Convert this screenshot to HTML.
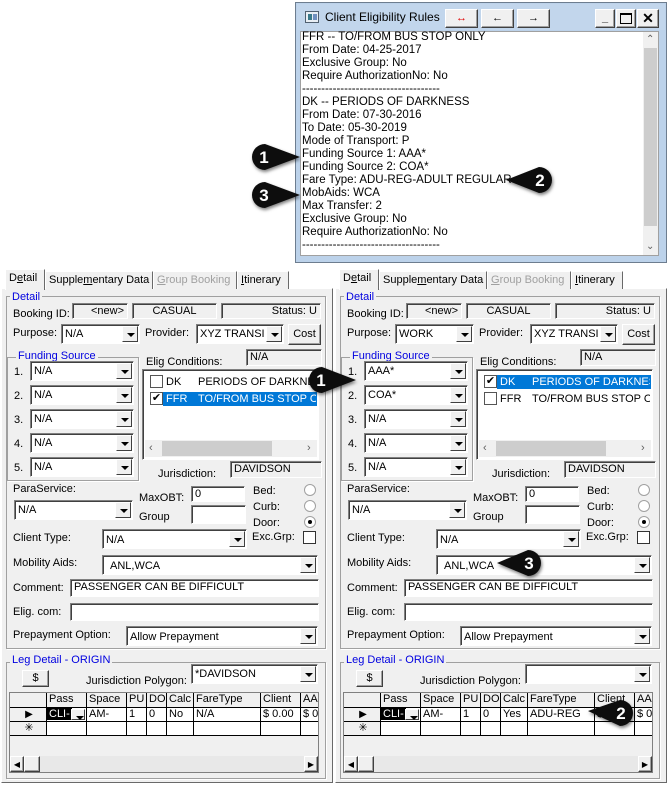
<!DOCTYPE html>
<html><head><meta charset="utf-8"><style>
*{box-sizing:border-box;margin:0;padding:0}
body{width:667px;height:785px;background:#fff;position:relative;overflow:hidden;font-family:"Liberation Sans",sans-serif;font-size:11px;color:#000}
.a{position:absolute;white-space:nowrap;line-height:14px}
.p{position:absolute;top:269px;width:334px;height:516px}
.body{position:absolute;left:1px;top:19px;width:332px;height:495px;background:#f0f0f0;border:1px solid;border-color:#fff #696969 #696969 #fff}
.tab{position:absolute;top:2px;height:18px;background:#f0f0f0;border:1px solid;border-bottom:none;border-color:#fff #696969 #696969 #fff;padding:2px 3px;line-height:13px;white-space:nowrap;overflow:hidden}
.gb{position:absolute;border:1px solid #a0a0a0;box-shadow:1px 1px #fff}
.gl{position:absolute;background:#f0f0f0;color:#0000e0;padding:0 2px;line-height:13px;white-space:nowrap}
.f{position:absolute;background:#fff;border:1px solid;border-color:#808080 #fff #fff #808080;box-shadow:inset 1px 1px #404040;padding:1px 3px;line-height:13px;overflow:hidden;white-space:nowrap}
.ro{background:#f0f0f0}
.dd{position:absolute;right:1px;top:1px;bottom:1px;width:16px;background:#f0f0f0;border:1px solid;border-color:#fff #404040 #404040 #fff}
.dd:after{content:"";position:absolute;left:4px;top:6px;border-left:4px solid transparent;border-right:4px solid transparent;border-top:4px solid #000}
.btn{position:absolute;background:#f0f0f0;border:1px solid;border-color:#fff #404040 #404040 #fff;box-shadow:inset -1px -1px #a0a0a0;text-align:center;line-height:15px}
.rad{position:absolute;width:12px;height:12px;border-radius:50%;background:#fff;border:1px solid #a0a0a0}
.chk{position:absolute;width:13px;height:13px;background:#fff;border:1px solid #555}
.g{position:absolute;border-right:1px solid #000;border-bottom:1px solid #000;line-height:13px;padding-left:2px;overflow:hidden;white-space:nowrap;background:#fff}
.gh{background:#f0f0f0}
</style></head><body>

<!-- top window -->
<div style="position:absolute;left:295px;top:2px;width:372px;height:261px;background:#bcd2ea;border:1px solid #6d7d8f"></div>
<div style="position:absolute;left:297px;top:4px;width:368px;height:26px;background:#c2d6ec"></div>
<div style="position:absolute;left:305px;top:11px;width:14px;height:12px;border:1px solid #506070;background:#e8eef4"><div style="position:absolute;left:2px;top:2px;width:4px;height:6px;background:#3a7a8a"></div><div style="position:absolute;left:7px;top:2px;width:4px;height:6px;background:#7090c0"></div></div>
<div class="a" style="left:325px;top:10px;font-size:12px">Client Eligibility Rules</div>
<div class="btn" style="left:445px;top:9px;width:33px;height:19px;color:#e00000;font-weight:bold;line-height:16px">↔</div>
<div class="btn" style="left:481px;top:9px;width:33px;height:19px;font-weight:bold;line-height:16px">←</div>
<div class="btn" style="left:517px;top:9px;width:33px;height:19px;font-weight:bold;line-height:16px">→</div>
<div class="btn" style="left:595px;top:9px;width:20px;height:19px;font-weight:bold;line-height:16px">_</div>
<div class="btn" style="left:616px;top:9px;width:20px;height:19px;"><div style="position:absolute;left:3px;top:3px;width:12px;height:11px;border:2px solid #000;border-width:2px 1px 1px 1px"></div></div>
<div class="btn" style="left:637px;top:9px;width:22px;height:19px;font-weight:bold;font-size:14px;line-height:16px">✕</div>
<div style="position:absolute;left:300px;top:31px;width:359px;height:225px;background:#fff;border:1px solid #a0a0a0"></div>
<div style="position:absolute;left:643px;top:32px;width:15px;height:223px;background:#f0f0f0"></div>
<div style="position:absolute;left:644px;top:48px;width:13px;height:178px;background:#cdcdcd"></div>
<div class="a" style="left:646px;top:33px;font-size:10px;color:#606060">⌃</div>
<div class="a" style="left:646px;top:240px;font-size:10px;color:#606060">⌄</div>
<div class="a" style="left:302px;top:31px;line-height:13px;font-size:11.5px">FFR -- TO/FROM BUS STOP ONLY<br>From Date: 04-25-2017<br>Exclusive Group: No<br>Require AuthorizationNo: No<br>------------------------------------<br>DK -- PERIODS OF DARKNESS<br>From Date: 07-30-2016<br>To Date: 05-30-2019<br>Mode of Transport: P<br>Funding Source 1: AAA*<br>Funding Source 2: COA*<br>Fare Type: ADU-REG-ADULT REGULAR<br>MobAids: WCA<br>Max Transfer: 2<br>Exclusive Group: No<br>Require AuthorizationNo: No<br>------------------------------------</div>

<!-- PANEL LEFT -->
<div class="p" style="left:0">
<div class="body"></div>
<div class="tab" style="left:5px;width:40px;top:0;height:21px;z-index:2">D<u>e</u>tail</div>
<div class="tab" style="left:45px;width:108px">Supple<u>m</u>entary Data</div>
<div class="tab" style="left:153px;width:84px;color:#a0a0a0"><u>G</u>roup Booking</div>
<div class="tab" style="left:237px;width:52px"><u>I</u>tinerary</div>
<div class="gb" style="left:6px;top:27px;width:320px;height:353px"></div>
<div class="gl" style="left:10px;top:22px">Detail</div>
<div class="a" style="left:13px;top:38px">Booking ID:</div>
<div class="f ro" style="left:72px;top:34px;width:56px;height:16px;text-align:right">&lt;new&gt;</div>
<div class="f ro" style="left:132px;top:34px;width:85px;height:16px;text-align:center">CASUAL</div>
<div class="f ro" style="left:221px;top:34px;width:100px;height:16px;text-align:right">Status: U</div>
<div class="a" style="left:13px;top:57px">Purpose:</div>
<div class="f" style="left:61px;top:55px;width:79px;height:20px;padding-top:3px">N/A<div class="dd"></div></div>
<div class="a" style="left:145px;top:57px">Provider:</div>
<div class="f" style="left:196px;top:55px;width:88px;height:20px;padding-top:3px">XYZ TRANSI<div class="dd"></div></div>
<div class="btn" style="left:288px;top:55px;width:33px;height:21px;line-height:18px">Cost</div>
<div class="gb" style="left:7px;top:88px;width:132px;height:124px"></div>
<div class="gl" style="left:16px;top:81px">Funding Source</div>
<div class="a" style="left:14px;top:96px">1.</div><div class="f" style="left:30px;top:92px;width:104px;height:20px;padding-top:3px">N/A<div class="dd"></div></div>
<div class="a" style="left:14px;top:120px">2.</div><div class="f" style="left:30px;top:116px;width:104px;height:20px;padding-top:3px">N/A<div class="dd"></div></div>
<div class="a" style="left:14px;top:144px">3.</div><div class="f" style="left:30px;top:140px;width:104px;height:20px;padding-top:3px">N/A<div class="dd"></div></div>
<div class="a" style="left:14px;top:168px">4.</div><div class="f" style="left:30px;top:164px;width:104px;height:20px;padding-top:3px">N/A<div class="dd"></div></div>
<div class="a" style="left:14px;top:192px">5.</div><div class="f" style="left:30px;top:188px;width:104px;height:20px;padding-top:3px">N/A<div class="dd"></div></div>
<div class="a" style="left:146px;top:86px">Elig Conditions:</div>
<div class="f ro" style="left:246px;top:80px;width:76px;height:17px">N/A</div>
<div class="f" style="left:142px;top:100px;width:177px;height:91px;padding:0"></div>
<div class="chk" style="left:150px;top:106px"></div>
<div class="a" style="left:166px;top:106px">DK</div><div class="a" style="left:198px;top:106px;width:117px;overflow:hidden">PERIODS OF DARKNESS</div>
<div style="position:absolute;left:163px;top:123px;width:154px;height:14px;background:#0078d7"></div>
<div class="chk" style="left:150px;top:123px;font-size:11px;line-height:11px;text-align:center">✔</div>
<div class="a" style="left:166px;top:123px;color:#fff">FFR</div><div class="a" style="left:198px;top:123px;width:118px;overflow:hidden;color:#fff">TO/FROM BUS STOP ONLY</div>
<div style="position:absolute;left:145px;top:171px;width:172px;height:17px;background:#f0f0f0"><div style="position:absolute;left:17px;top:1px;width:110px;height:15px;background:#cdcdcd"></div><span class="a" style="left:4px;top:1px;color:#606060">‹</span><span class="a" style="left:162px;top:1px;color:#606060">›</span></div>
<div class="a" style="left:158px;top:198px">Jurisdiction:</div>
<div class="f ro" style="left:230px;top:192px;width:92px;height:17px">DAVIDSON</div>
<div class="a" style="left:13px;top:213px">ParaService:</div>
<div class="f" style="left:14px;top:231px;width:119px;height:20px;padding-top:3px">N/A<div class="dd"></div></div>
<div class="a" style="left:139px;top:222px">MaxOBT:</div>
<div class="f" style="left:191px;top:217px;width:54px;height:16px">0</div>
<div class="a" style="left:139px;top:241px">Group</div>
<div class="f" style="left:191px;top:236px;width:55px;height:19px"></div>
<div class="a" style="left:253px;top:215px">Bed:</div><div class="rad" style="left:304px;top:215px"></div>
<div class="a" style="left:253px;top:231px">Curb:</div><div class="rad" style="left:304px;top:231px"></div>
<div class="a" style="left:253px;top:247px">Door:</div><div class="rad" style="left:304px;top:247px"><div style="position:absolute;left:3px;top:3px;width:4px;height:4px;border-radius:50%;background:#000"></div></div>
<div class="a" style="left:13px;top:262px">Client Type:</div>
<div class="f" style="left:102px;top:260px;width:145px;height:20px;padding-top:4px">N/A<div class="dd"></div></div>
<div class="a" style="left:252px;top:261px">Exc.Grp:</div>
<div class="chk" style="left:303px;top:262px;border-color:#333"></div>
<div class="a" style="left:13px;top:287px">Mobility Aids:</div>
<div class="f" style="left:102px;top:286px;width:216px;height:20px;padding:4px 0 0 7px">ANL,WCA<div class="dd"></div></div>
<div class="a" style="left:13px;top:312px">Comment:</div>
<div class="f" style="left:70px;top:310px;width:249px;height:18px">PASSENGER CAN BE DIFFICULT</div>
<div class="a" style="left:13px;top:336px">Elig. com:</div>
<div class="f" style="left:70px;top:334px;width:249px;height:18px"></div>
<div class="a" style="left:13px;top:359px">Prepayment Option:</div>
<div class="f" style="left:126px;top:357px;width:192px;height:20px;padding:4px 0 0 3px">Allow Prepayment<div class="dd"></div></div>
<div class="gb" style="left:6px;top:393px;width:320px;height:117px"></div>
<div class="gl" style="left:10px;top:385px">Leg Detail - ORIGIN</div>
<div class="btn" style="left:22px;top:401px;width:27px;height:17px">$</div>
<div class="a" style="left:86px;top:405px">Jurisdiction Polygon:</div>
<div class="f" style="left:191px;top:395px;width:127px;height:20px;padding-top:3px">*DAVIDSON<div class="dd"></div></div>
<div style="position:absolute;left:9px;top:423px;width:310px;height:81px;background:#f0f0f0;border:1px solid #808080;overflow:hidden">
<div class="g gh" style="left:0;top:0;width:37px;height:15px"></div>
<div class="g gh" style="left:37px;top:0;width:40px;height:15px">Pass</div>
<div class="g gh" style="left:77px;top:0;width:40px;height:15px">Space</div>
<div class="g gh" style="left:117px;top:0;width:20px;height:15px">PU</div>
<div class="g gh" style="left:137px;top:0;width:20px;height:15px">DO</div>
<div class="g gh" style="left:157px;top:0;width:27px;height:15px">Calc</div>
<div class="g gh" style="left:184px;top:0;width:67px;height:15px">FareType</div>
<div class="g gh" style="left:251px;top:0;width:40px;height:15px">Client</div>
<div class="g gh" style="left:291px;top:0;width:20px;height:15px">AA</div>
<div class="g gh" style="left:0;top:15px;width:37px;height:14px;text-align:center;font-size:10px">▶</div>
<div class="g" style="left:37px;top:15px;width:40px;height:14px;padding:0"><span style="background:#000;color:#fff;padding:0 2px">CLI-</span><div class="dd" style="width:14px;right:1px"></div></div>
<div class="g" style="left:77px;top:15px;width:40px;height:14px">AM-</div>
<div class="g" style="left:117px;top:15px;width:20px;height:14px">1</div>
<div class="g" style="left:137px;top:15px;width:20px;height:14px">0</div>
<div class="g" style="left:157px;top:15px;width:27px;height:14px">No</div>
<div class="g" style="left:184px;top:15px;width:67px;height:14px">N/A</div>
<div class="g" style="left:251px;top:15px;width:40px;height:14px">$ 0.00</div>
<div class="g" style="left:291px;top:15px;width:20px;height:14px">$ 0</div>
<div class="g gh" style="left:0;top:29px;width:37px;height:14px;text-align:center">✳</div>
<div class="g" style="left:37px;top:29px;width:40px;height:14px"></div><div class="g" style="left:77px;top:29px;width:40px;height:14px"></div><div class="g" style="left:117px;top:29px;width:20px;height:14px"></div><div class="g" style="left:137px;top:29px;width:20px;height:14px"></div><div class="g" style="left:157px;top:29px;width:27px;height:14px"></div><div class="g" style="left:184px;top:29px;width:67px;height:14px"></div><div class="g" style="left:251px;top:29px;width:40px;height:14px"></div><div class="g" style="left:291px;top:29px;width:20px;height:14px"></div>
<div style="position:absolute;left:0;top:63px;width:310px;height:16px;background:#e8e8e8"><div class="btn" style="left:0;top:0;width:14px;height:16px;font-size:8px">◀</div><div class="btn" style="left:14px;top:0;width:16px;height:16px"></div><div class="btn" style="left:294px;top:0;width:14px;height:16px;font-size:8px">▶</div></div>
</div>
</div>

<!-- PANEL RIGHT -->
<div class="p" style="left:334px">
<div class="body"></div>
<div class="tab" style="left:5px;width:40px;top:0;height:21px;z-index:2">D<u>e</u>tail</div>
<div class="tab" style="left:45px;width:108px">Supple<u>m</u>entary Data</div>
<div class="tab" style="left:153px;width:84px;color:#a0a0a0"><u>G</u>roup Booking</div>
<div class="tab" style="left:237px;width:52px"><u>I</u>tinerary</div>
<div class="gb" style="left:6px;top:27px;width:320px;height:353px"></div>
<div class="gl" style="left:10px;top:22px">Detail</div>
<div class="a" style="left:13px;top:38px">Booking ID:</div>
<div class="f ro" style="left:72px;top:34px;width:56px;height:16px;text-align:right">&lt;new&gt;</div>
<div class="f ro" style="left:132px;top:34px;width:85px;height:16px;text-align:center">CASUAL</div>
<div class="f ro" style="left:221px;top:34px;width:100px;height:16px;text-align:right">Status: U</div>
<div class="a" style="left:13px;top:57px">Purpose:</div>
<div class="f" style="left:61px;top:55px;width:79px;height:20px;padding-top:3px">WORK<div class="dd"></div></div>
<div class="a" style="left:145px;top:57px">Provider:</div>
<div class="f" style="left:196px;top:55px;width:88px;height:20px;padding-top:3px">XYZ TRANSI<div class="dd"></div></div>
<div class="btn" style="left:288px;top:55px;width:33px;height:21px;line-height:18px">Cost</div>
<div class="gb" style="left:7px;top:88px;width:132px;height:124px"></div>
<div class="gl" style="left:16px;top:81px">Funding Source</div>
<div class="a" style="left:14px;top:96px">1.</div><div class="f" style="left:30px;top:92px;width:104px;height:20px;padding-top:3px">AAA*<div class="dd"></div></div>
<div class="a" style="left:14px;top:120px">2.</div><div class="f" style="left:30px;top:116px;width:104px;height:20px;padding-top:3px">COA*<div class="dd"></div></div>
<div class="a" style="left:14px;top:144px">3.</div><div class="f" style="left:30px;top:140px;width:104px;height:20px;padding-top:3px">N/A<div class="dd"></div></div>
<div class="a" style="left:14px;top:168px">4.</div><div class="f" style="left:30px;top:164px;width:104px;height:20px;padding-top:3px">N/A<div class="dd"></div></div>
<div class="a" style="left:14px;top:192px">5.</div><div class="f" style="left:30px;top:188px;width:104px;height:20px;padding-top:3px">N/A<div class="dd"></div></div>
<div class="a" style="left:146px;top:86px">Elig Conditions:</div>
<div class="f ro" style="left:246px;top:80px;width:76px;height:17px">N/A</div>
<div class="f" style="left:142px;top:100px;width:177px;height:91px;padding:0"></div>
<div style="position:absolute;left:163px;top:106px;width:154px;height:14px;background:#0078d7"></div>
<div class="chk" style="left:150px;top:106px;font-size:11px;line-height:11px;text-align:center">✔</div>
<div class="a" style="left:166px;top:106px;color:#fff">DK</div><div class="a" style="left:198px;top:106px;width:118px;overflow:hidden;color:#fff">PERIODS OF DARKNESS</div>
<div class="chk" style="left:150px;top:123px"></div>
<div class="a" style="left:166px;top:123px">FFR</div><div class="a" style="left:198px;top:123px;width:118px;overflow:hidden">TO/FROM BUS STOP ONLY</div>
<div style="position:absolute;left:145px;top:171px;width:172px;height:17px;background:#f0f0f0"><div style="position:absolute;left:17px;top:1px;width:110px;height:15px;background:#cdcdcd"></div><span class="a" style="left:4px;top:1px;color:#606060">‹</span><span class="a" style="left:162px;top:1px;color:#606060">›</span></div>
<div class="a" style="left:158px;top:198px">Jurisdiction:</div>
<div class="f ro" style="left:230px;top:192px;width:92px;height:17px">DAVIDSON</div>
<div class="a" style="left:13px;top:213px">ParaService:</div>
<div class="f" style="left:14px;top:231px;width:119px;height:20px;padding-top:3px">N/A<div class="dd"></div></div>
<div class="a" style="left:139px;top:222px">MaxOBT:</div>
<div class="f" style="left:191px;top:217px;width:54px;height:16px">0</div>
<div class="a" style="left:139px;top:241px">Group</div>
<div class="f" style="left:191px;top:236px;width:55px;height:19px"></div>
<div class="a" style="left:253px;top:215px">Bed:</div><div class="rad" style="left:304px;top:215px"></div>
<div class="a" style="left:253px;top:231px">Curb:</div><div class="rad" style="left:304px;top:231px"></div>
<div class="a" style="left:253px;top:247px">Door:</div><div class="rad" style="left:304px;top:247px"><div style="position:absolute;left:3px;top:3px;width:4px;height:4px;border-radius:50%;background:#000"></div></div>
<div class="a" style="left:13px;top:262px">Client Type:</div>
<div class="f" style="left:102px;top:260px;width:145px;height:20px;padding-top:4px">N/A<div class="dd"></div></div>
<div class="a" style="left:252px;top:261px">Exc.Grp:</div>
<div class="chk" style="left:303px;top:262px;border-color:#333"></div>
<div class="a" style="left:13px;top:287px">Mobility Aids:</div>
<div class="f" style="left:102px;top:286px;width:216px;height:20px;padding:4px 0 0 7px">ANL,WCA<div class="dd"></div></div>
<div class="a" style="left:13px;top:312px">Comment:</div>
<div class="f" style="left:70px;top:310px;width:249px;height:18px">PASSENGER CAN BE DIFFICULT</div>
<div class="a" style="left:13px;top:336px">Elig. com:</div>
<div class="f" style="left:70px;top:334px;width:249px;height:18px"></div>
<div class="a" style="left:13px;top:359px">Prepayment Option:</div>
<div class="f" style="left:126px;top:357px;width:192px;height:20px;padding:4px 0 0 3px">Allow Prepayment<div class="dd"></div></div>
<div class="gb" style="left:6px;top:393px;width:320px;height:117px"></div>
<div class="gl" style="left:10px;top:385px">Leg Detail - ORIGIN</div>
<div class="btn" style="left:22px;top:401px;width:27px;height:17px">$</div>
<div class="a" style="left:86px;top:405px">Jurisdiction Polygon:</div>
<div class="f" style="left:191px;top:395px;width:127px;height:20px;padding-top:3px"><div class="dd"></div></div>
<div style="position:absolute;left:9px;top:423px;width:310px;height:81px;background:#f0f0f0;border:1px solid #808080;overflow:hidden">
<div class="g gh" style="left:0;top:0;width:37px;height:15px"></div>
<div class="g gh" style="left:37px;top:0;width:40px;height:15px">Pass</div>
<div class="g gh" style="left:77px;top:0;width:40px;height:15px">Space</div>
<div class="g gh" style="left:117px;top:0;width:20px;height:15px">PU</div>
<div class="g gh" style="left:137px;top:0;width:20px;height:15px">DO</div>
<div class="g gh" style="left:157px;top:0;width:27px;height:15px">Calc</div>
<div class="g gh" style="left:184px;top:0;width:67px;height:15px">FareType</div>
<div class="g gh" style="left:251px;top:0;width:40px;height:15px">Client</div>
<div class="g gh" style="left:291px;top:0;width:20px;height:15px">AA</div>
<div class="g gh" style="left:0;top:15px;width:37px;height:14px;text-align:center;font-size:10px">▶</div>
<div class="g" style="left:37px;top:15px;width:40px;height:14px;padding:0"><span style="background:#000;color:#fff;padding:0 2px">CLI-</span><div class="dd" style="width:14px;right:1px"></div></div>
<div class="g" style="left:77px;top:15px;width:40px;height:14px">AM-</div>
<div class="g" style="left:117px;top:15px;width:20px;height:14px">1</div>
<div class="g" style="left:137px;top:15px;width:20px;height:14px">0</div>
<div class="g" style="left:157px;top:15px;width:27px;height:14px">Yes</div>
<div class="g" style="left:184px;top:15px;width:67px;height:14px">ADU-REG</div>
<div class="g" style="left:251px;top:15px;width:40px;height:14px">$ 0.00</div>
<div class="g" style="left:291px;top:15px;width:20px;height:14px">$ 0</div>
<div class="g gh" style="left:0;top:29px;width:37px;height:14px;text-align:center">✳</div>
<div class="g" style="left:37px;top:29px;width:40px;height:14px"></div><div class="g" style="left:77px;top:29px;width:40px;height:14px"></div><div class="g" style="left:117px;top:29px;width:20px;height:14px"></div><div class="g" style="left:137px;top:29px;width:20px;height:14px"></div><div class="g" style="left:157px;top:29px;width:27px;height:14px"></div><div class="g" style="left:184px;top:29px;width:67px;height:14px"></div><div class="g" style="left:251px;top:29px;width:40px;height:14px"></div><div class="g" style="left:291px;top:29px;width:20px;height:14px"></div>
<div style="position:absolute;left:0;top:63px;width:310px;height:16px;background:#e8e8e8"><div class="btn" style="left:0;top:0;width:14px;height:16px;font-size:8px">◀</div><div class="btn" style="left:14px;top:0;width:16px;height:16px"></div><div class="btn" style="left:294px;top:0;width:14px;height:16px;font-size:8px">▶</div></div>
</div>
</div>

<!-- callouts -->
<svg width="667" height="785" style="position:absolute;left:0;top:0" font-family="Liberation Sans, sans-serif">
<defs><filter id="s" x="-50%" y="-50%" width="200%" height="200%"><feDropShadow dx="1" dy="2" stdDeviation="1.5" flood-opacity="0.5"/></filter></defs>
<g filter="url(#s)" fill="#111">
<path d="M265 144 A13 13 0 1 0 265 170 L300 157 Z"/>
<path d="M265 182 A13 13 0 1 0 265 208 L300 195 Z"/>
<path d="M539 167 A13 13 0 1 1 539 193 L506 180 Z"/>
<path d="M322 367 A13 13 0 1 0 322 393 L356 380 Z"/>
<path d="M528 550 A13 13 0 1 1 528 576 L497 563 Z"/>
<path d="M620 700 A13 13 0 1 1 620 726 L588 711 Z"/>
</g>
<g fill="#fff" font-size="17" font-weight="bold" text-anchor="middle">
<text x="264" y="163">1</text>
<text x="264" y="201">3</text>
<text x="540" y="186">2</text>
<text x="321" y="386">1</text>
<text x="529" y="569">3</text>
<text x="621" y="719">2</text>
</g>
</svg>
</body></html>
